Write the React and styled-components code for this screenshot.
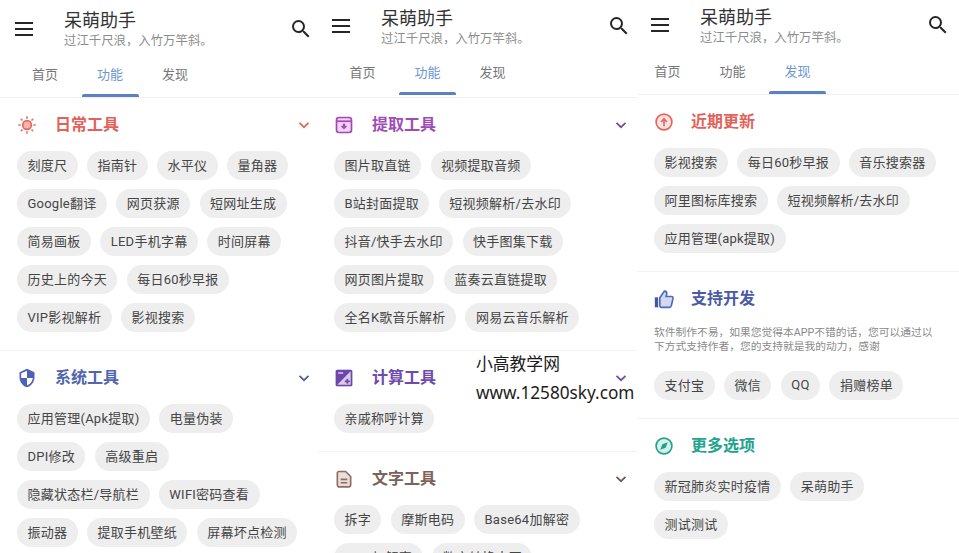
import React from "react";
import styled, { createGlobalStyle } from "styled-components";

const Global = createGlobalStyle`
  html, body { margin: 0; padding: 0; background: #fff; }
  body { width: 959px; height: 553px; overflow: hidden; font-family: Roboto, "Noto Sans CJK SC", sans-serif; }
`;

const Page = styled.div`
  position: relative;
  display: grid;
  grid-template-columns: 318px 319px 322px;
  width: 959px;
  height: 553px;
  overflow: hidden;
  background: #fff;
`;
const Panel = styled.section`
  min-width: 0;
  height: 553px;
  overflow: hidden;
  display: flex;
  flex-direction: column;
`;
const Header = styled.header`
  height: ${p => p.$height}px;
  flex: none;
  box-sizing: content-box;
  padding-top: ${p => p.$top}px;
  border-bottom: 1px solid #f1f1f1;
  overflow: hidden;
`;
const AppBar = styled.div`
  display: flex;
  align-items: center;
  height: 40px;
  padding: 0 ${p => p.$right}px 0 ${p => p.$left}px;
`;
const IconButton = styled.span`
  display: flex;
  flex: none;
  color: #262626;
  margin-bottom: ${p => p.$lift}px;
`;
const Titles = styled.div`
  flex: 1;
  margin-left: 31px;
  min-width: 0;
`;
const Title = styled.div`
  font-size: 18px;
  line-height: 22px;
  color: #333;
`;
const Subtitle = styled.div`
  font-size: 12.4px;
  line-height: 18px;
  color: #8d8d8d;
`;
const Tabs = styled.nav`
  display: flex;
  margin-top: ${p => p.$gap}px;
  margin-left: ${p => p.$offset}px;
`;
const Tab = styled.div`
  width: 65px;
  display: flex;
  flex-direction: column;
  align-items: center;
  gap: ${p => p.$gap}px;
  font-size: 13px;
  line-height: 18px;
  color: ${p => (p.$active ? "#6c97cf" : "#777")};
  &::after {
    content: "";
    width: 57px;
    height: 3px;
    border-radius: 2px 2px 0 0;
    background: ${p => (p.$active ? "#5b80c4" : "transparent")};
  }
`;
const Section = styled.div`
  padding: 14px ${p => p.$right}px 18px ${p => p.$left}px;
  border-bottom: 1px solid #f2f2f2;
  &:last-child { border-bottom: none; }
`;
const SectionHead = styled.div`
  display: flex;
  align-items: center;
  height: 26px;
  margin-bottom: 13px;
  color: ${p => p.$color};
`;
const IconSlot = styled.span`
  display: flex;
  justify-content: center;
  flex: none;
  width: 20px;
  margin-right: ${p => p.$gap}px;
`;
const SectionTitle = styled.h2`
  flex: 1;
  margin: 0;
  font-size: 16px;
  line-height: 26px;
  font-weight: 700;
`;
const Chevron = styled.span`
  display: flex;
  flex: none;
`;
const Description = styled.p`
  margin: 0 0 17px;
  padding-top: 1px;
  font-size: 10.75px;
  line-height: 14px;
  color: #8a8a8a;
  white-space: nowrap;
`;
const Chips = styled.div`
  display: flex;
  flex-wrap: wrap;
  gap: 9px 9.4px;
  max-width: 284px;
`;
const Chip = styled.span`
  display: inline-flex;
  align-items: center;
  box-sizing: border-box;
  height: 29px;
  padding: 0 10.45px 2px;
  border-radius: 15px;
  background: #eeeeee;
  color: #454545;
  font-size: 13px;
  letter-spacing: 0.25px;
  white-space: nowrap;
`;
const Watermark = styled.div`
  position: absolute;
  left: 476px;
  top: 349px;
  color: #1c1c1c;
  white-space: nowrap;
`;
const WatermarkLine = styled.div`
  font-family: "Noto Sans", "Noto Sans CJK SC", sans-serif;
  font-size: ${p => p.$size}px;
  line-height: 29px;
`;

const Menu = () => (
  <svg width="18" height="14" viewBox="0 0 18 14"><path d="M0 1h18M0 7h18M0 13h18" stroke="currentColor" strokeWidth="2" /></svg>
);
const Search = () => (
  <svg width="24" height="24" viewBox="0 0 24 24"><path fill="currentColor" d="M15.5 14h-.79l-.28-.27A6.47 6.47 0 0 0 16 9.5 6.5 6.5 0 1 0 9.5 16c1.61 0 3.09-.59 4.23-1.57l.27.28v.79l5 4.99L20.49 19l-4.99-5zm-6 0C7.01 14 5 11.99 5 9.5S7.01 5 9.5 5 14 7.01 14 9.5 11.99 14 9.5 14z" /></svg>
);
const Down = ({ color }) => (
  <svg width="14" height="14" viewBox="0 0 14 14" fill="none"><path d="M2.5 4.8 7 9.2l4.5-4.4" stroke={color} strokeWidth="1.7" /></svg>
);

const Sun = () => (
  <svg width="20" height="20" viewBox="0 0 24 24"><circle cx="12" cy="12" r="5.2" fill="#f6b4ac" stroke="#e5665d" strokeWidth="2" /><path d="M12 1.5v3M12 19.5v3M1.5 12h3M19.5 12h3M4.6 4.6l2 2M17.4 17.4l2 2M4.6 19.4l2-2M17.4 6.6l2-2" stroke="#e5746b" strokeWidth="2" /></svg>
);
const Archive = () => (
  <svg width="20" height="20" viewBox="0 0 24 24" fill="none"><rect x="3" y="3" width="18" height="18" rx="3" fill="#eed6f3" stroke="#a447b8" strokeWidth="2" /><path d="M3 7.5h18" stroke="#a447b8" strokeWidth="2" /><path d="M10.5 10.5h3v2.8H16L12 17.5 8 13.3h2.5z" fill="#a447b8" /></svg>
);
const Shield = () => (
  <svg width="20" height="20" viewBox="0 0 24 24"><path fill="#ffffff" d="M12 1 3 5v6c0 5.55 3.84 10.74 9 12 5.16-1.26 9-6.45 9-12V5z" /><path fill="#4f62b4" d="M12 1 3 5v6c0 5.55 3.84 10.74 9 12 5.16-1.26 9-6.45 9-12V5l-9-4zm0 10.99h7c-.53 4.12-3.28 7.79-7 8.94V12H5V6.3l7-3.11v8.8z" /></svg>
);
const Exposure = () => (
  <svg width="20" height="20" viewBox="0 0 24 24"><rect x="2" y="2" width="20" height="20" rx="2" fill="#d9cdea" /><path fill="#6d45ad" d="M15 17v2h2v-2h2v-2h-2v-2h-2v2h-2v2h2zm5-15H4c-1.1 0-2 .9-2 2v16c0 1.1.9 2 2 2h16c1.1 0 2-.9 2-2V4c0-1.1-.9-2-2-2zM5 5h6v2H5V5zm15 15H4L20 4v16z" /></svg>
);
const Doc = () => (
  <svg width="20" height="20" viewBox="0 0 24 24" fill="none"><path d="M6 3h8l6 6v10a2.500 2.500 0 0 1-2.500 2.500h-11A2.500 2.500 0 0 1 4 19V5a2 2 0 0 1 2-2z" fill="#e9ded9" stroke="#8d6e63" strokeWidth="2" /><path d="M8 12.500h8M8 16.500h8" stroke="#8d6e63" strokeWidth="2" /></svg>
);
const UpCircle = () => (
  <svg width="20" height="20" viewBox="0 0 24 24" fill="none"><circle cx="12" cy="12" r="9.500" fill="#fbe3e1" stroke="#e5665d" strokeWidth="2" /><path d="M12 17V9.500M8.500 12 12 8l3.500 4" stroke="#e5665d" strokeWidth="2" /></svg>
);
const Thumb = () => (
  <svg width="20" height="20" viewBox="0 0 24 24"><rect x="1" y="10" width="4" height="12" fill="#4058a8" /><path d="M7 10.500 12.500 2.500c1.800 0 2.800 1.200 2.800 3L14.500 9H21c1.300 0 2 1 1.800 2.300l-1.900 8.400c-.3 1.300-1.100 2.300-2.400 2.300H9c-1.100 0-2-.9-2-2z" fill="#d3d9f2" stroke="#4f69c0" strokeWidth="2" /></svg>
);
const Compass = () => (
  <svg width="20" height="20" viewBox="0 0 24 24" fill="none"><circle cx="12" cy="12" r="9.500" fill="#d5f1eb" stroke="#26a08c" strokeWidth="2" /><path d="M16.500 7.500 14 14l-6.500 2.500L10 10z" fill="#26a08c" /></svg>
);

const panels = [
  {
    top: 10, height: 87, barLeft: 15, barRight: 5, lift: 2, tabGap: 16, tabOffset: 12.5, underlineGap: 10, active: 1, left: 17, right: 7, iconGap: 18,
    sections: [
      { title: "日常工具", color: "#e2625a", chevron: "#d9695f", icon: <Sun />, chips: ["刻度尺", "指南针", "水平仪", "量角器", "Google翻译", "网页获源", "短网址生成", "简易画板", "LED手机字幕", "时间屏幕", "历史上的今天", "每日60秒早报", "VIP影视解析", "影视搜索"] },
      { title: "系统工具", color: "#5265ae", chevron: "#4f5f9f", icon: <Shield />, chips: ["应用管理(Apk提取)", "电量伪装", "DPI修改", "高级重启", "隐藏状态栏/导航栏", "WIFI密码查看", "振动器", "提取手机壁纸", "屏幕坏点检测"] },
    ],
  },
  {
    top: 8, height: 89, barLeft: 14, barRight: 6, lift: 4, tabGap: 16, tabOffset: 12, underlineGap: 10, active: 1, left: 16, right: 9, iconGap: 18,
    sections: [
      { title: "提取工具", color: "#a04cb6", chevron: "#7e4a91", icon: <Archive />, chips: ["图片取直链", "视频提取音频", "B站封面提取", "短视频解析/去水印", "抖音/快手去水印", "快手图集下载", "网页图片提取", "蓝奏云直链提取", "全名K歌音乐解析", "网易云音乐解析"] },
      { title: "计算工具", color: "#6f4bab", chevron: "#6f4bab", icon: <Exposure />, chips: ["亲戚称呼计算"] },
      { title: "文字工具", color: "#7d6258", chevron: "#6f5a50", icon: <Doc />, chips: ["拆字", "摩斯电码", "Base64加解密", "MD5加解密", "数字转换大写"] },
    ],
  },
  {
    top: 7, height: 87, barLeft: 14, barRight: 9, lift: 5, tabGap: 16, tabOffset: -2, underlineGap: 10, active: 2, left: 17, right: 13, iconGap: 17,
    sections: [
      { title: "近期更新", color: "#e2625a", icon: <UpCircle />, chips: ["影视搜索", "每日60秒早报", "音乐搜索器", "阿里图标库搜索", "短视频解析/去水印", "应用管理(apk提取)"] },
      { title: "支持开发", color: "#4a5ba4", icon: <Thumb />, desc: ["软件制作不易\uFF0C如果您觉得本APP不错的话\uFF0C您可以通过以", "下方式支持作者\uFF0C您的支持就是我的动力\uFF0C感谢"], chips: ["支付宝", "微信", "QQ", "捐赠榜单"] },
      { title: "更多选项", color: "#22a38e", icon: <Compass />, chips: ["新冠肺炎实时疫情", "呆萌助手", "测试测试"] },
    ],
  },
];

const tabNames = ["首页", "功能", "发现"];
const subtitle = "过江千尺浪\uFF0C入竹万竿斜。";

export default function App() {
  return (
    <Page>
      <Global />
      {panels.map((panel, i) => (
        <Panel key={i}>
          <Header $top={panel.top} $height={panel.height}>
            <AppBar $left={panel.barLeft} $right={panel.barRight}>
              <IconButton $lift={panel.lift}><Menu /></IconButton>
              <Titles>
                <Title>呆萌助手</Title>
                <Subtitle>{subtitle}</Subtitle>
              </Titles>
              <IconButton $lift={panel.lift}><Search /></IconButton>
            </AppBar>
            <Tabs $gap={panel.tabGap} $offset={panel.tabOffset}>
              {tabNames.map((name, t) => (
                <Tab key={name} $active={t === panel.active} $gap={panel.underlineGap}>{name}</Tab>
              ))}
            </Tabs>
          </Header>
          {panel.sections.map(section => (
            <Section key={section.title} $left={panel.left} $right={panel.right}>
              <SectionHead $color={section.color}>
                <IconSlot $gap={panel.iconGap}>{section.icon}</IconSlot>
                <SectionTitle>{section.title}</SectionTitle>
                {section.chevron && <Chevron><Down color={section.chevron} /></Chevron>}
              </SectionHead>
              {section.desc && (
                <Description>{section.desc[0]}<br />{section.desc[1]}</Description>
              )}
              <Chips>
                {section.chips.map(chip => <Chip key={chip}>{chip}</Chip>)}
              </Chips>
            </Section>
          ))}
        </Panel>
      ))}
      <Watermark>
        <WatermarkLine $size={16.8}>小高教学网</WatermarkLine>
        <WatermarkLine $size={17.2}>www.12580sky.com</WatermarkLine>
      </Watermark>
    </Page>
  );
}
